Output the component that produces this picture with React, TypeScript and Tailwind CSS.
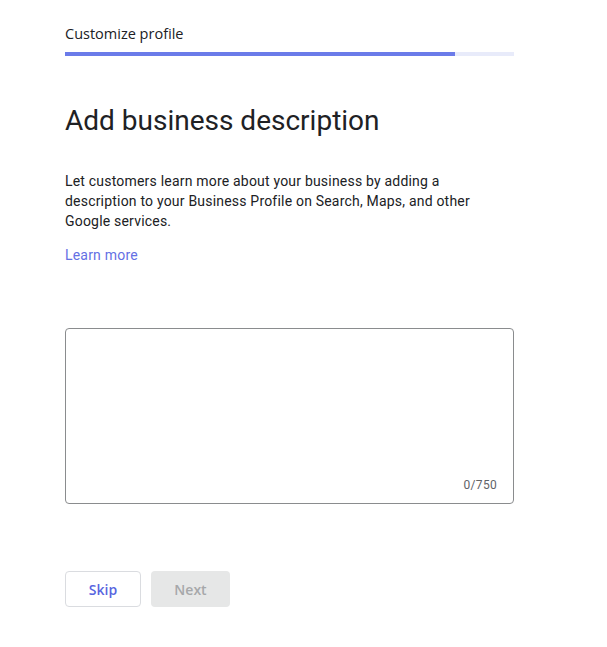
import React from "react";

export default function App() {
  return (
    <div className="min-h-[647px] w-[607px] bg-white" style={{ fontFamily: "Roboto, 'Liberation Sans', sans-serif" }}>
      <div className="ml-[65px] w-[449px] pt-[26px]">
        <div className="text-[14.5px] font-medium leading-[16px] text-[#202124]" style={{ fontFamily: "'Open Sans', Roboto, sans-serif" }}>
          Customize profile
        </div>
        <div className="mt-[10px] flex h-[4px] w-full bg-[#e8ebfa]">
          <div className="h-full w-[390px] bg-[#6b7be9]" />
        </div>
        <h1
          className="mt-[47px] text-[28px] font-normal leading-[36px] text-[#202124]"
          style={{ fontFamily: "Roboto, 'Open Sans', sans-serif" }}
        >
          Add business description
        </h1>
        <p className="mt-[32px] max-w-[412px] text-[14px] leading-[20px] tracking-[0.2px] text-[#202124]">
          Let customers learn more about your business by adding a description to your Business Profile on Search, Maps, and other Google services.
        </p>
        <a className="mt-[14px] block text-[14px] leading-[20px] tracking-[0.2px] text-[#6470e4]">Learn more</a>
        <div className="mt-[63px] flex h-[176px] flex-col justify-end rounded-[4px] border border-[#8a8c8e] px-[16px] pb-[10px]">
          <div className="text-right text-[12px] leading-[16px] tracking-[0.3px] text-[#5f6368]">0/750</div>
        </div>
        <div className="mt-[67px] flex gap-[10px]" style={{ fontFamily: "'Open Sans', Roboto, sans-serif" }}>
          <button className="h-[36px] w-[76px] rounded-[4px] border border-[#dadce0] bg-white text-[14px] font-semibold text-[#5865e0]">
            Skip
          </button>
          <button className="h-[36px] w-[79px] rounded-[4px] bg-[#e6e7e7] text-[14px] font-semibold text-[#a6a8aa]">
            Next
          </button>
        </div>
      </div>
    </div>
  );
}
